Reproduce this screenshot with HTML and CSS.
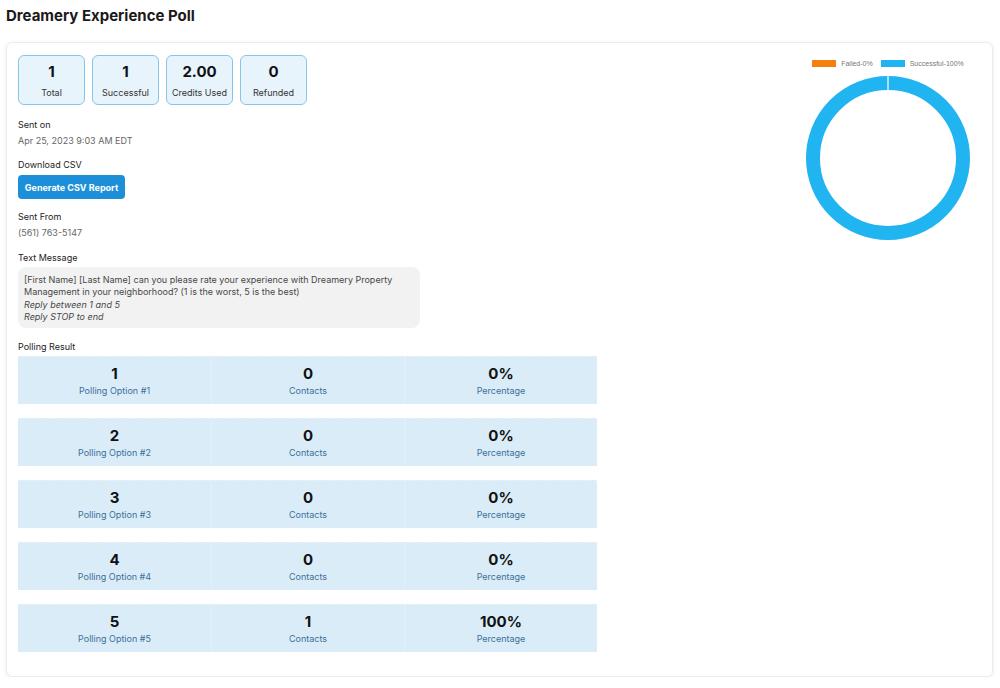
FILE: index.html
```html
<!DOCTYPE html>
<html lang="en">
<head>
    <meta charset="UTF-8">
    <meta name="viewport" content="width=device-width, initial-scale=1.0">
    <title>Dreamery Experience Poll</title>
    <link rel="stylesheet" href="styles.css">
</head>
<body>

    <h2 class="page-title">Dreamery Experience Poll</h2>

    <div class="card">
        <div class="main">
            <div class="stats">
                <div class="stat"><div class="stat-num">1</div><div class="stat-label">Total</div></div>
                <div class="stat"><div class="stat-num">1</div><div class="stat-label">Successful</div></div>
                <div class="stat"><div class="stat-num">2.00</div><div class="stat-label">Credits Used</div></div>
                <div class="stat"><div class="stat-num">0</div><div class="stat-label">Refunded</div></div>
            </div>

            <div class="field">
                <div class="field-label">Sent on</div>
                <div class="field-value">Apr 25, 2023 9:03 AM EDT</div>
            </div>

            <div class="field">
                <div class="field-label">Download CSV</div>
                <button class="btn">Generate CSV Report</button>
            </div>

            <div class="field">
                <div class="field-label">Sent From</div>
                <div class="field-value">(561) 763-5147</div>
            </div>

            <div class="field message-field">
                <div class="field-label">Text Message</div>
                <div class="message">
                    [First Name] [Last Name] can you please rate your experience with Dreamery Property Management in your neighborhood? (1 is the worst, 5 is the best)<br>
                    <em>Reply between 1 and 5</em><br>
                    <em>Reply STOP to end</em>
                </div>
            </div>

            <div class="field poll-field">
                <div class="field-label">Polling Result</div>
                <div class="poll-list">
                    <div class="poll-row">
                        <div class="poll-cell"><div class="poll-num">1</div><div class="poll-label">Polling Option #1</div></div>
                        <div class="poll-cell"><div class="poll-num">0</div><div class="poll-label">Contacts</div></div>
                        <div class="poll-cell"><div class="poll-num">0%</div><div class="poll-label">Percentage</div></div>
                    </div>
                    <div class="poll-row">
                        <div class="poll-cell"><div class="poll-num">2</div><div class="poll-label">Polling Option #2</div></div>
                        <div class="poll-cell"><div class="poll-num">0</div><div class="poll-label">Contacts</div></div>
                        <div class="poll-cell"><div class="poll-num">0%</div><div class="poll-label">Percentage</div></div>
                    </div>
                    <div class="poll-row">
                        <div class="poll-cell"><div class="poll-num">3</div><div class="poll-label">Polling Option #3</div></div>
                        <div class="poll-cell"><div class="poll-num">0</div><div class="poll-label">Contacts</div></div>
                        <div class="poll-cell"><div class="poll-num">0%</div><div class="poll-label">Percentage</div></div>
                    </div>
                    <div class="poll-row">
                        <div class="poll-cell"><div class="poll-num">4</div><div class="poll-label">Polling Option #4</div></div>
                        <div class="poll-cell"><div class="poll-num">0</div><div class="poll-label">Contacts</div></div>
                        <div class="poll-cell"><div class="poll-num">0%</div><div class="poll-label">Percentage</div></div>
                    </div>
                    <div class="poll-row">
                        <div class="poll-cell"><div class="poll-num">5</div><div class="poll-label">Polling Option #5</div></div>
                        <div class="poll-cell"><div class="poll-num">1</div><div class="poll-label">Contacts</div></div>
                        <div class="poll-cell"><div class="poll-num">100%</div><div class="poll-label">Percentage</div></div>
                    </div>
                </div>
            </div>
        </div>

        <div class="chart">
            <div class="legend">
                <span class="swatch failed"></span><span class="legend-text">Failed-0%</span>
                <span class="swatch success"></span><span class="legend-text">Successful-100%</span>
            </div>
            <svg class="donut" width="166" height="166" viewBox="0 0 166 166">
                <circle cx="83" cy="83" r="75" fill="none" stroke="#20b4f1" stroke-width="14"/>
                <line x1="83" y1="0" x2="83" y2="17" stroke="#fff" stroke-width="1.2"/>
            </svg>
        </div>
    </div>

</body>
</html>
```

FILE: styles.css
```css
body {
    font-family: Inter, "Noto Sans", sans-serif;
    margin: 0;
    padding: 0 6px;
    background: #fff;
    color: #222;
}
.page-title {
    font-size: 15px;
    font-weight: 700;
    color: #1a1a1a;
    margin: 0;
    padding: 6px 0 0;
    height: 36px;
    line-height: 20px;
}
.card {
    display: flex;
    justify-content: space-between;
    width: 987px;
    height: 635px;
    box-sizing: border-box;
    padding: 12px 21px 0 11px;
    border: 1px solid #ececec;
    border-radius: 6px;
    box-shadow: 0 1px 4px rgba(0, 0, 0, 0.08);
    background: #fff;
}
.main {
    width: 579px;
}
.stats {
    display: flex;
    gap: 7px;
    margin-bottom: 14px;
}
.stat {
    width: 67px;
    height: 50px;
    box-sizing: border-box;
    border: 1px solid #86c6e8;
    border-radius: 6px;
    background: #e8f4fc;
    text-align: center;
    padding-top: 7px;
}
.stat-num {
    font-size: 15px;
    font-weight: 700;
    color: #111;
    line-height: 18px;
}
.stat-label {
    font-size: 9px;
    color: #333;
    margin-top: 6px;
    line-height: 12px;
}
.field {
    margin-bottom: 12px;
}
.field-label {
    font-size: 9px;
    line-height: 12px;
    color: #222;
    margin-bottom: 4px;
}
.field-value {
    font-size: 9px;
    line-height: 12px;
    color: #666;
}
.btn {
    display: block;
    font-family: inherit;
    font-size: 9px;
    font-weight: 700;
    color: #fff;
    background: #1d8fd9;
    border: none;
    border-radius: 4px;
    height: 24px;
    width: 107px;
    padding: 0;
    margin-top: 0;
}
.message-field {
    margin-top: 13px;
}
.message {
    width: 402px;
    box-sizing: border-box;
    background: #f2f2f2;
    border-radius: 8px;
    padding: 7px 6px 4px;
    font-size: 9px;
    line-height: 12.4px;
    color: #484848;
    margin-top: -1px;
}
.poll-field {
    margin-top: 13px;
}
.poll-field .field-label {
    margin-bottom: 3px;
}
.poll-list {
    display: flex;
    flex-direction: column;
    gap: 14px;
}
.poll-row {
    display: grid;
    grid-template-columns: repeat(3, 1fr);
    height: 48px;
    background: #d9ecf8;
    border-top: 1px dashed #e6f2fa;
    box-sizing: border-box;
}
.poll-cell {
    text-align: center;
    padding-top: 8px;
    border-left: 1px solid #e2f0f9;
}
.poll-cell:first-child {
    border-left: none;
}
.poll-num {
    font-size: 15px;
    font-weight: 700;
    color: #111;
    line-height: 18px;
}
.poll-label {
    font-size: 9px;
    color: #3e6f99;
    line-height: 12px;
    margin-top: 2px;
}
.chart {
    display: flex;
    flex-direction: column;
    align-items: center;
    width: 166px;
    padding-top: 5px;
}
.legend {
    display: flex;
    align-items: center;
    white-space: nowrap;
    font-family: "Liberation Sans", Arial, sans-serif;
    font-size: 7px;
    color: #777;
    margin-bottom: 8px;
}
.swatch {
    display: inline-block;
    width: 24px;
    height: 7px;
    margin-right: 5px;
}
.swatch.failed {
    background: #f5800f;
}
.swatch.success {
    background: #20b4f1;
}
.legend-text {
    margin-right: 8px;
}
.legend-text:last-child {
    margin-right: 0;
}
```
